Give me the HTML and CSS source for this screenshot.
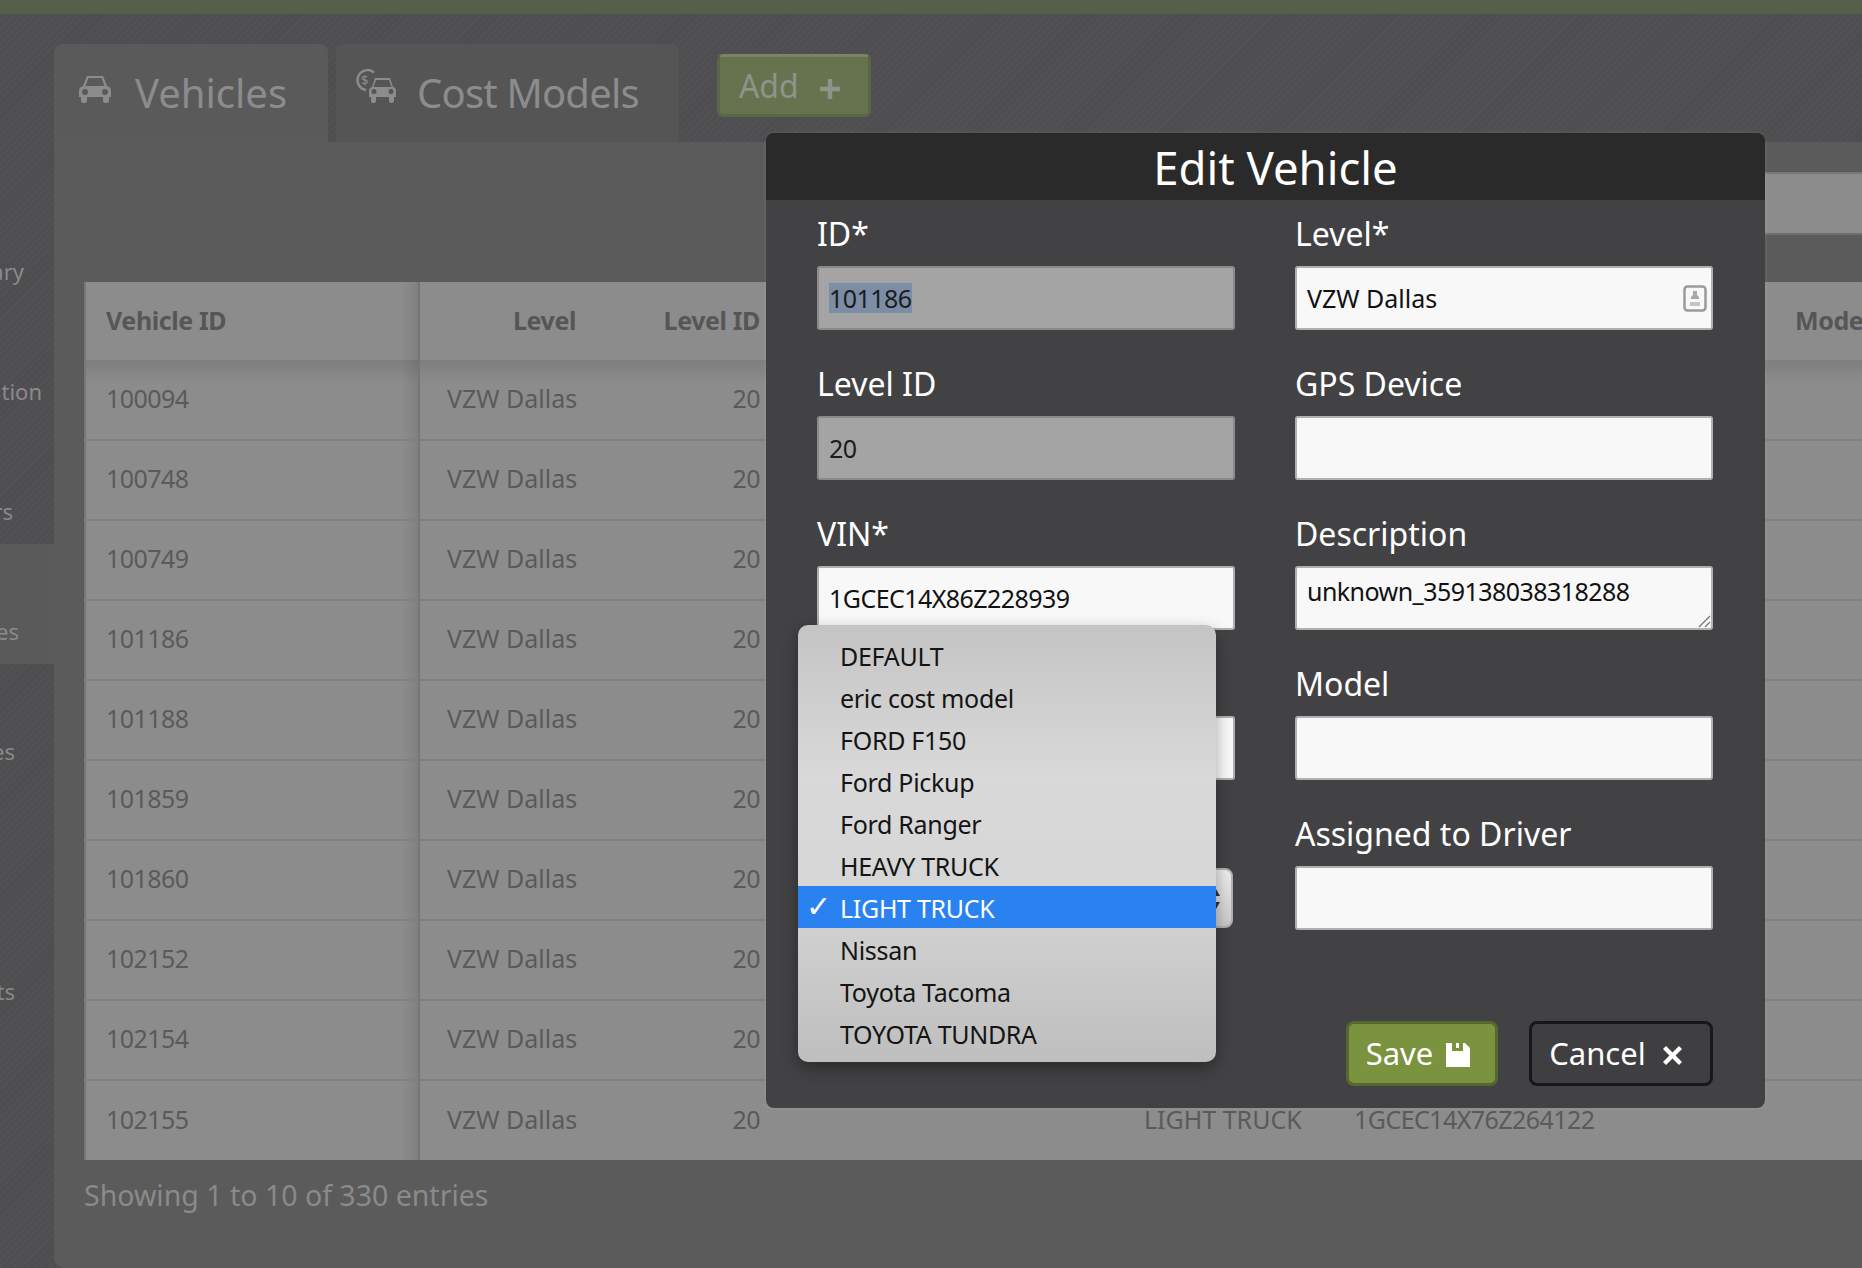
FILE: index.html
```html
<!DOCTYPE html>
<html>
<head>
<meta charset="UTF-8">
<meta name="viewport" content="width=device-width, initial-scale=1.0">
<title>Edit Vehicle</title>
<link rel="stylesheet" href="styles.css">
</head>
<body>
    <div class="topbar"></div>
    <div class="shell">
        <nav class="sidebar">
            <div class="nav-item">ary</div>
            <div class="nav-item">tion</div>
            <div class="nav-item">rs</div>
            <div class="nav-item active">es</div>
            <div class="nav-item">es</div>
            <div class="nav-item"></div>
            <div class="nav-item">ts</div>
        </nav>
        <main class="content">
            <div class="tabs">
                <div class="tab active">
                    <svg class="icon-car" viewBox="0 0 32 28"><path fill="currentColor" fill-rule="evenodd" d="M8 1h16l4 10c2 .5 4 2 4 5v6h-2v4c0 1-1 2-2 2h-2c-1 0-2-1-2-2v-4H8v4c0 1-1 2-2 2H4c-1 0-2-1-2-2v-4H0v-6c0-3 2-4.500 4-5zm1.500 2L6.500 11h19l-3-8zM6 14a3 3 0 1 0 0 6 3 3 0 0 0 0-6zm20 0a3 3 0 1 0 0 6 3 3 0 0 0 0-6z"/></svg>
                    <span>Vehicles</span>
                </div>
                <div class="tab">
                    <svg class="icon-money" viewBox="0 0 42 36">
                        <path fill="none" stroke="currentColor" stroke-width="2.500" d="M18 4.500A10 10 0 1 0 10 22"/>
                        <text x="5" y="17" class="dollar">$</text>
                        <path fill="currentColor" fill-rule="evenodd" d="M19 10h15l3 9c2 .5 3 2 3 4v6h-2v4c0 1-1 2-2 2h-1c-1 0-2-1-2-2v-4H20v4c0 1-1 2-2 2h-1c-1 0-2-1-2-2v-4h-2v-6c0-2 1-3.500 3-4zm1 2l-2.500 7h18l-2.500-7zM18 21a2.500 2.500 0 1 0 0 5 2.500 2.500 0 0 0 0-5zm17 0a2.500 2.500 0 1 0 0 5 2.500 2.500 0 0 0 0-5z"/>
                    </svg>
                    <span class="tab-tight">Cost Models</span>
                </div>
                <button class="btn-add">Add <svg class="icon-plus" viewBox="0 0 20 20"><path fill="currentColor" d="M8 1h4v7h7v4h-7v7H8v-7H1V8h7z"/></svg></button>
            </div>
            <div class="panel">
                <div class="filter-row"><div class="filter-box"></div></div>
                <table class="grid">
                    <colgroup>
                        <col class="col-id"><col class="col-level"><col class="col-levelid"><col class="col-cost"><col class="col-type"><col class="col-vin"><col class="col-mode">
                    </colgroup>
                    <thead>
                        <tr><th>Vehicle ID</th><th class="right">Level</th><th class="right">Level ID</th><th></th><th></th><th></th><th>Mode</th></tr>
                    </thead>
                    <tbody>
                        <tr><td class="num">100094</td><td>VZW Dallas</td><td class="right num">20</td><td></td><td></td><td></td><td></td></tr>
                        <tr><td class="num">100748</td><td>VZW Dallas</td><td class="right num">20</td><td></td><td></td><td></td><td></td></tr>
                        <tr><td class="num">100749</td><td>VZW Dallas</td><td class="right num">20</td><td></td><td></td><td></td><td></td></tr>
                        <tr><td class="num">101186</td><td>VZW Dallas</td><td class="right num">20</td><td></td><td></td><td></td><td></td></tr>
                        <tr><td class="num">101188</td><td>VZW Dallas</td><td class="right num">20</td><td></td><td></td><td></td><td></td></tr>
                        <tr><td class="num">101859</td><td>VZW Dallas</td><td class="right num">20</td><td></td><td></td><td></td><td></td></tr>
                        <tr><td class="num">101860</td><td>VZW Dallas</td><td class="right num">20</td><td></td><td></td><td></td><td></td></tr>
                        <tr><td class="num">102152</td><td>VZW Dallas</td><td class="right num">20</td><td></td><td></td><td></td><td></td></tr>
                        <tr><td class="num">102154</td><td>VZW Dallas</td><td class="right num">20</td><td></td><td></td><td></td><td></td></tr>
                        <tr><td class="num">102155</td><td>VZW Dallas</td><td class="right num">20</td><td></td><td>LIGHT TRUCK</td><td class="num">1GCEC14X76Z264122</td><td></td></tr>
                    </tbody>
                </table>
                <div class="entries">Showing 1 to 10 of 330 entries</div>
            </div>
        </main>
    </div>

    <div class="modal">
        <h2 class="modal-title">Edit Vehicle</h2>
        <form class="modal-form">
            <div class="field">
                <label>ID*</label>
                <div class="input readonly num"><span class="selected-text">101186</span></div>
            </div>
            <div class="field">
                <label>Level*</label>
                <div class="input">VZW Dallas
                    <svg class="icon-contact" viewBox="0 0 24 27"><rect x="1.500" y="1.500" width="21" height="24" rx="3" fill="none" stroke="#9a9a9a" stroke-width="2.500"/><path fill="#a8a8a8" d="M10 6h4v4l2 2v2H8v-2l2-2z"/><rect x="7" y="17" width="10" height="4" fill="#c4c4c4"/></svg>
                </div>
            </div>
            <div class="field">
                <label>Level ID</label>
                <div class="input readonly num">20</div>
            </div>
            <div class="field">
                <label>GPS Device</label>
                <div class="input"></div>
            </div>
            <div class="field">
                <label>VIN*</label>
                <div class="input num">1GCEC14X86Z228939</div>
            </div>
            <div class="field">
                <label>Description</label>
                <div class="input textarea num">unknown_359138038318288
                    <svg class="icon-grip" viewBox="0 0 14 14"><path stroke="#777" stroke-width="1.300" d="M2 13L13 2M8 13l5-5"/></svg>
                </div>
            </div>
            <div class="field">
                <label></label>
                <div class="input"></div>
            </div>
            <div class="field">
                <label>Model</label>
                <div class="input"></div>
            </div>
            <div class="field">
                <label></label>
                <div class="input select">
                    <svg class="icon-updown" viewBox="0 0 10 22"><path fill="#333" d="M5 1l4 7H1zM1 14h8l-4 7z"/></svg>
                </div>
            </div>
            <div class="field">
                <label>Assigned to Driver</label>
                <div class="input"></div>
            </div>
        </form>
        <div class="modal-actions">
            <button class="btn-save">Save
                <svg class="icon-save" viewBox="0 0 24 24"><path fill="#fff" fill-rule="evenodd" d="M0 0h19l5 5v19H0zM6 0v8h11V0h-4v5h-3V0z"/></svg>
            </button>
            <button class="btn-cancel">Cancel
                <svg class="icon-x" viewBox="0 0 20 20"><path fill="#fff" d="M3.200 0L10 6.800 16.800 0 20 3.200 13.200 10 20 16.800 16.800 20 10 13.200 3.200 20 0 16.800 6.800 10 0 3.200z"/></svg>
            </button>
        </div>

        <ul class="dropdown">
            <li>DEFAULT</li>
            <li>eric cost model</li>
            <li>FORD F150</li>
            <li>Ford Pickup</li>
            <li>Ford Ranger</li>
            <li>HEAVY TRUCK</li>
            <li class="current"><span class="check">✓</span>LIGHT TRUCK</li>
            <li>Nissan</li>
            <li>Toyota Tacoma</li>
            <li>TOYOTA TUNDRA</li>
        </ul>
    </div>
</body>
</html>
```

FILE: styles.css
```css
* {
    box-sizing: border-box;
}
html, body {
    margin: 0;
    padding: 0;
    height: 100%;
}
body {
    width: 1862px;
    height: 1268px;
    overflow: hidden;
    position: relative;
    font-family: "Noto Sans", sans-serif;
    font-size: 25px;
    color: #5a5a5a;
    background-color: #4e4e50;
    background-image: repeating-linear-gradient(135deg, rgba(255, 255, 255, 0.02) 0, rgba(255, 255, 255, 0.02) 2px, transparent 2px, transparent 5px);
}
.topbar {
    height: 14px;
    background-color: #55604a;
}
.shell {
    display: flex;
    height: 1254px;
}
.num {
    letter-spacing: -0.55px;
}

/* left menu, pushed off the screen edge */
.sidebar {
    width: 54px;
    padding-top: 170px;
    overflow: hidden;
    flex-shrink: 0;
}
.nav-item {
    height: 120px;
    margin-left: -30px;
    padding-top: 72px;
    font-size: 22px;
    line-height: 30px;
    color: #8a8a8a;
    text-align: right;
    white-space: nowrap;
}
.nav-item:nth-child(1) { padding-right: 30px; }
.nav-item:nth-child(2) { padding-right: 12px; }
.nav-item:nth-child(3) { padding-right: 41px; }
.nav-item:nth-child(4) { padding-right: 35px; }
.nav-item:nth-child(5) { padding-right: 39px; }
.nav-item:nth-child(7) { padding-right: 39px; }
.nav-item.active {
    background-color: #5a5a5a;
}

.content {
    flex: 1;
    min-width: 0;
}
.tabs {
    display: flex;
    align-items: flex-start;
    height: 128px;
    padding-top: 30px;
}
.tab {
    width: 274px;
    height: 98px;
    margin-right: 8px;
    padding: 21px 0 0 25px;
    display: flex;
    align-items: flex-start;
    gap: 24px;
    border-radius: 8px 8px 0 0;
    background-color: #555556;
    color: #8c8c8c;
    font-size: 40px;
    line-height: 56px;
}
.tab.active {
    background-color: #5a5a5a;
}
.tab + .tab {
    width: 343px;
    padding-left: 20px;
    gap: 19px;
}
.tab-tight {
    letter-spacing: -0.8px;
}
.icon-car {
    width: 32px;
    height: 28px;
    margin-top: 10px;
}
.icon-money {
    width: 42px;
    height: 36px;
    margin-top: 3px;
}
.dollar {
    font-size: 13px;
    fill: currentColor;
}
.btn-add {
    width: 154px;
    height: 63px;
    margin: 10px 0 0 30px;
    padding: 0 8px 0 0;
    border: 3px solid #5b6648;
    border-top-color: #79846a;
    border-radius: 6px;
    background-color: #67734f;
    color: #8e9489;
    font-family: inherit;
    font-size: 32px;
}
.icon-plus {
    width: 22px;
    height: 22px;
    margin-left: 12px;
    vertical-align: -2px;
}

.panel {
    height: 1126px;
    padding: 30px 0 0 30px;
    border-radius: 0 0 0 10px;
    background-color: #5b5b5b;
    overflow: hidden;
}
.filter-row {
    display: flex;
    justify-content: flex-end;
    height: 110px;
}
.filter-box {
    width: 400px;
    height: 63px;
    background-color: #8c8c8c;
    border-top: 2px solid #777;
    border-bottom: 2px solid #6d6d6d;
}
.grid {
    width: 1778px;
    table-layout: fixed;
    border-collapse: collapse;
    background-color: #8c8c8c;
    border-left: 2px solid #777;
}
.col-id { width: 334px; }
.col-level { width: 177px; }
.col-levelid { width: 184px; }
.col-cost { width: 344px; }
.col-type { width: 210px; }
.col-vin { width: 440px; }
.col-mode { width: 89px; }
.grid th, .grid td {
    padding: 0 20px;
    text-align: left;
    white-space: nowrap;
    overflow: hidden;
}
.grid th {
    height: 78px;
    padding-bottom: 2px;
    font-size: 25px;
    letter-spacing: -0.4px;
    color: #565656;
    font-weight: 700;
}
.grid th:last-child {
    padding-left: 21px;
    padding-right: 0;
}
.grid td {
    height: 80px;
    padding-bottom: 4px;
    border-top: 2px solid #808080;
}
.grid .right {
    text-align: right;
}
.grid th:first-child, .grid td:first-child {
    border-right: 2px solid #757575;
    background-image: linear-gradient(to left, rgba(0, 0, 0, 0.09), transparent 16px);
}
.grid tbody tr:first-child td {
    border-top: 0;
    background-image: linear-gradient(to bottom, rgba(0, 0, 0, 0.1), transparent 24px);
}
.grid tbody tr:first-child td:first-child {
    background-image: linear-gradient(to left, rgba(0, 0, 0, 0.09), transparent 16px), linear-gradient(to bottom, rgba(0, 0, 0, 0.1), transparent 24px);
}
.grid td:nth-child(2) {
    padding-left: 27px;
}
.entries {
    margin-top: 17px;
    font-size: 28.500px;
    line-height: 36px;
    color: #8a8a8a;
}

/* dialog */
.modal {
    position: absolute;
    left: 766px;
    top: 133px;
    width: 999px;
    height: 975px;
    border-radius: 8px;
    background-color: #424244;
    box-shadow: 0 0 0 2px rgba(255, 255, 255, 0.04);
}
.modal-title {
    margin: 0;
    height: 67px;
    padding-left: 20px;
    border-radius: 8px 8px 0 0;
    background-color: #2a2a2a;
    color: #ffffff;
    font-size: 45.500px;
    font-weight: 400;
    line-height: 69px;
    text-align: center;
}
.modal-form {
    display: grid;
    grid-template-columns: 418px 418px;
    column-gap: 60px;
    padding: 16px 0 0 51px;
}
.field {
    height: 150px;
}
.field label {
    display: block;
    height: 50px;
    color: #ffffff;
    font-size: 32px;
    line-height: 36px;
}
.input {
    position: relative;
    height: 64px;
    padding-left: 10px;
    border: 2px solid #b0b0b0;
    border-radius: 3px;
    background-color: #f8f8f8;
    color: #111;
    line-height: 60px;
}
.input.readonly {
    background-color: #a4a4a4;
    border-color: #8a8a8a;
    color: #1c1c1c;
}
.selected-text {
    display: inline-block;
    height: 30px;
    line-height: 30px;
    background-color: #7b8ea6;
}
.input.textarea {
    line-height: 47px;
}
.input.select {
    width: 416px;
    height: 60px;
    margin-top: 2px;
    border-radius: 8px;
    background-image: linear-gradient(#eeeeee, #c8c8c8);
}
.icon-contact {
    position: absolute;
    right: 4px;
    top: 17px;
    width: 24px;
    height: 27px;
}
.icon-grip {
    position: absolute;
    right: 0;
    bottom: 0;
    width: 14px;
    height: 14px;
}
.icon-updown {
    position: absolute;
    right: 10px;
    top: 18px;
    width: 10px;
    height: 22px;
}
.modal-actions {
    display: flex;
    justify-content: flex-end;
    gap: 31px;
    margin-top: 55px;
    padding-right: 52px;
}
.modal-actions button {
    height: 65px;
    padding: 0 0 2px;
    border-radius: 8px;
    color: #ffffff;
    font-family: inherit;
    font-size: 31px;
}
.btn-save {
    width: 152px;
    border: 3px solid #55682f;
    background-color: #7b933f;
}
.modal-actions .btn-save {
    padding-right: 8px;
}
.btn-cancel {
    width: 184px;
    border: 3px solid #18181a;
    background-color: #3f3f41;
}
.modal-actions .btn-cancel {
    padding-right: 11px;
}
.icon-save {
    width: 24px;
    height: 24px;
    margin-left: 5px;
    vertical-align: -2px;
}
.icon-x {
    width: 19px;
    height: 19px;
    margin-left: 9px;
    vertical-align: 0;
}

/* native select popup */
.dropdown {
    position: absolute;
    left: 32px;
    top: 492px;
    width: 418px;
    height: 437px;
    margin: 0;
    padding: 9px 0 0;
    list-style: none;
    border-radius: 10px;
    background-image: linear-gradient(#c4c4c4, #d9d9d9 35%, #d6d6d6 60%, #bebebe);
    box-shadow: 0 6px 16px rgba(0, 0, 0, 0.35);
}
.dropdown li {
    position: relative;
    height: 42px;
    padding-left: 42px;
    color: #141414;
    letter-spacing: -0.3px;
    line-height: 44px;
}
.dropdown li.current {
    background-color: #2a82f0;
    color: #ffffff;
}
.check {
    position: absolute;
    left: 8px;
    top: -1px;
    font-family: "DejaVu Sans", sans-serif;
    font-size: 30px;
    font-weight: 700;
}
```
